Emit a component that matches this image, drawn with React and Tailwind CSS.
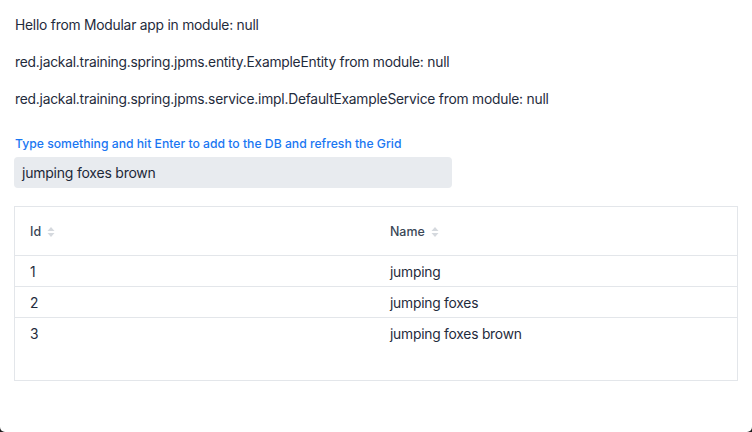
import React from "react";

function SortIcon() {
  return (
    <svg width="8" height="12" viewBox="0 0 8 12" className="ml-[6px] inline-block">
      <path d="M4 1 L7.5 5 L0.5 5 Z" fill="#d5d9de" />
      <path d="M4 11 L7.5 7 L0.5 7 Z" fill="#d5d9de" />
    </svg>
  );
}

export default function App() {
  const rows = [
    { id: 1, name: "jumping" },
    { id: 2, name: "jumping foxes" },
    { id: 3, name: "jumping foxes brown" },
  ];
  return (
    <div className="w-[752px] h-[432px] bg-[#1e1e1e]">
      <div
        className="w-full h-full bg-white rounded-b-[5px] text-[#1f2b3c] text-[13.8px] tracking-[-0.22px] pt-[14px] px-[14px]"
        style={{ fontFamily: "Inter, 'Noto Sans', sans-serif" }}
      >
        <div className="flex flex-col gap-[15px] pl-[1px]">
          <p className="leading-[22px]">Hello from Modular app in module: null</p>
          <p className="leading-[22px]">red.jackal.training.spring.jpms.entity.ExampleEntity from module: null</p>
          <p className="leading-[22px]">red.jackal.training.spring.jpms.service.impl.DefaultExampleService from module: null</p>
        </div>
        <div className="mt-[26px] text-[12.2px] tracking-normal leading-[16px] text-[#1a77f2] pl-[1px] font-medium">
          Type something and hit Enter to add to the DB and refresh the Grid
        </div>
        <div className="mt-[5px] w-[438px] h-[31px] rounded-[4px] bg-[#e8ebef] flex items-center pl-[8px] text-[14px] text-[#1c2838]">
          jumping foxes brown
        </div>
        <div className="mt-[18px] w-[724px] h-[175px] border border-[#e3e6ea] flex flex-col">
          <div className="h-[49px] pt-[2px] flex items-center border-b border-[#e3e6ea] text-[12.4px] tracking-normal text-[#3a4656] font-medium">
            <div className="w-[360px] pl-[15px] flex items-center">
              Id
              <SortIcon />
            </div>
            <div className="pl-[15px] flex items-center">
              Name
              <SortIcon />
            </div>
          </div>
          {rows.map((r, i) => (
            <div
              key={r.id}
              className={
                "h-[31px] pt-[2px] flex items-center " +
                (i < rows.length - 1 ? "border-b border-[#e3e6ea]" : "")
              }
            >
              <div className="w-[360px] pl-[15px]">{r.id}</div>
              <div className="pl-[15px]">{r.name}</div>
            </div>
          ))}
        </div>
      </div>
    </div>
  );
}
